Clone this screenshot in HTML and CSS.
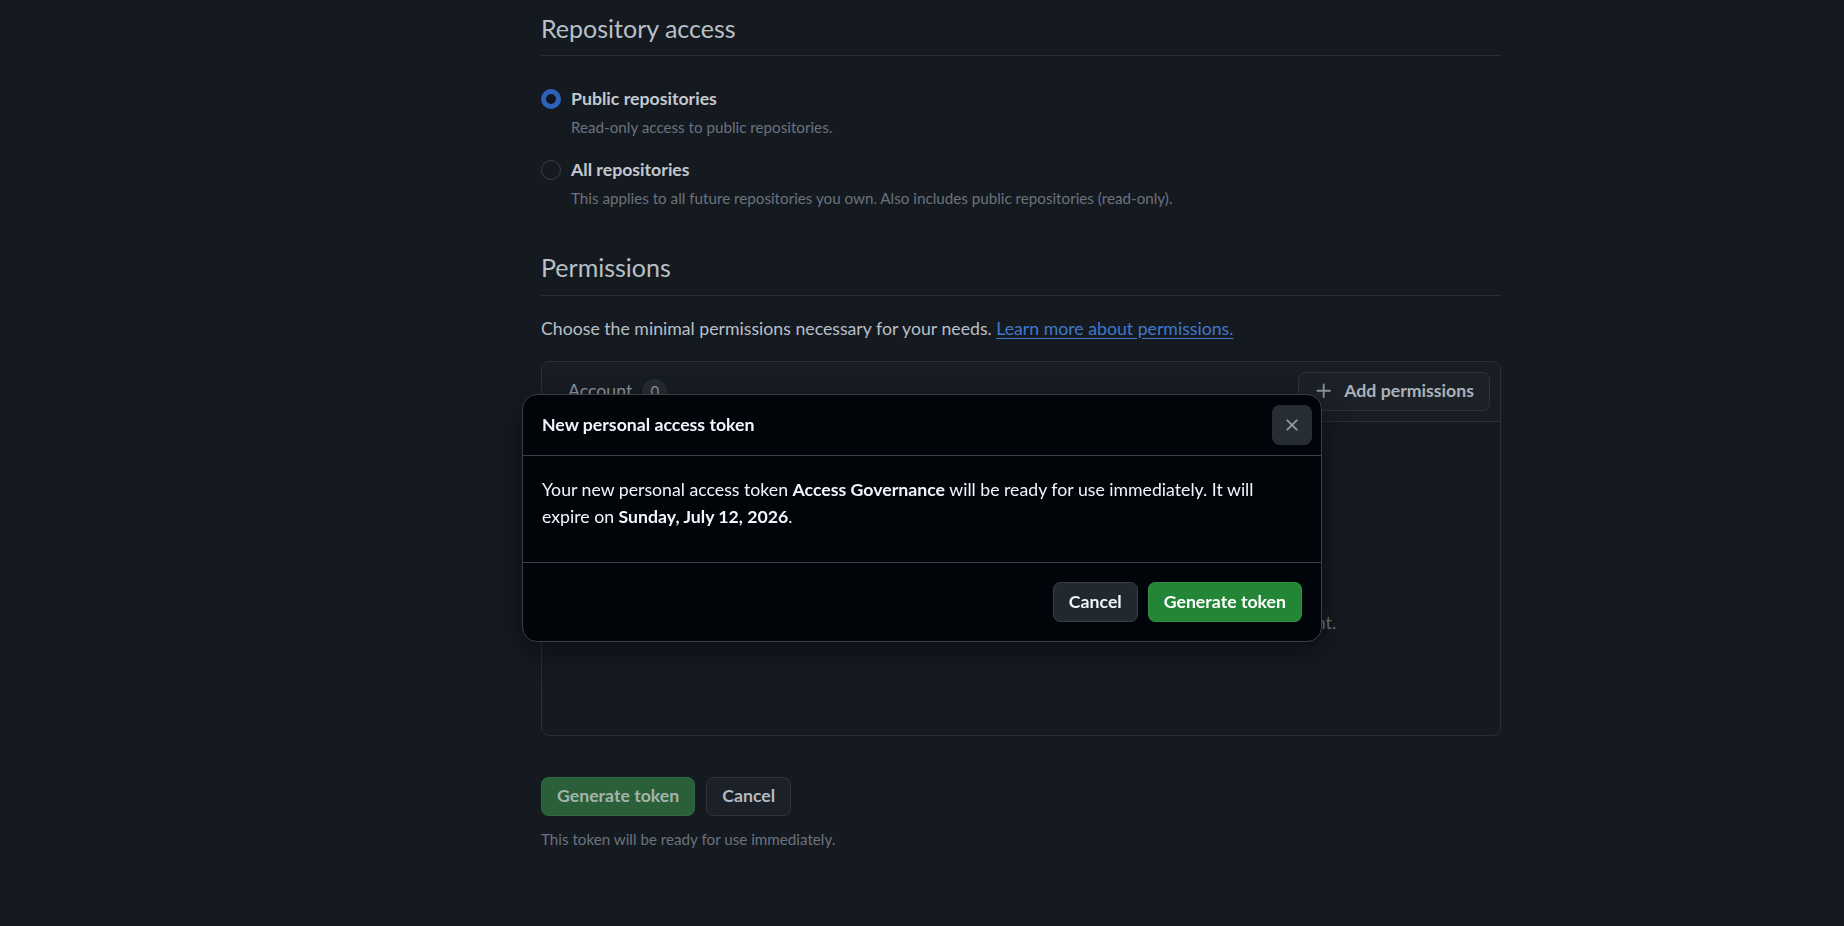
FILE: index.html
```html
<!DOCTYPE html>
<html lang="en">
<head>
<meta charset="utf-8">
<title>New fine-grained personal access token</title>
<link rel="stylesheet" href="styles.css">
</head>
<body>
<div class="layout">
  <aside class="sidebar"></aside>
  <main class="main">
    <section class="section">
      <h2 class="subhead">Repository access</h2>
      <div class="radio-list">
        <div class="radio-item">
          <span class="radio radio-checked"></span>
          <div class="radio-body">
            <div class="radio-label">Public repositories</div>
            <div class="note">Read-only access to public repositories.</div>
          </div>
        </div>
        <div class="radio-item">
          <span class="radio"></span>
          <div class="radio-body">
            <div class="radio-label">All repositories</div>
            <div class="note">This applies to all future repositories you own. Also includes public repositories (read-only).</div>
          </div>
        </div>
      </div>
    </section>

    <section class="section section-perms">
      <h2 class="subhead">Permissions</h2>
      <p class="lead">Choose the minimal permissions necessary for your needs. <a href="#" class="link">Learn more about permissions.</a></p>
      <div class="box">
        <div class="box-header">
          <div class="tabs">
            <span class="tab tab-selected">Account <span class="counter">0</span></span>
          </div>
          <button class="btn btn-add" type="button">
            <svg class="icon" viewBox="0 0 16 16" width="20" height="20" aria-hidden="true"><path fill="currentColor" d="M7.75 2a.75.75 0 0 1 .75.75V7h4.25a.75.75 0 0 1 0 1.5H8.5v4.25a.75.75 0 0 1-1.5 0V8.5H2.75a.75.75 0 0 1 0-1.5H7V2.75A.75.75 0 0 1 7.75 2Z"/></svg>
            <span>Add permissions</span>
          </button>
        </div>
        <div class="blankslate">
          <h3 class="blankslate-title">No account permissions added yet</h3>
          <p class="blankslate-text">Account permissions allow this token to access resources owned by your account.</p>
        </div>
      </div>
      <div class="form-actions">
        <button class="btn btn-green-dim" type="button">Generate token</button>
        <button class="btn btn-gray-dim" type="button">Cancel</button>
      </div>
      <p class="note note-footer">This token will be ready for use immediately.</p>
    </section>
  </main>
</div>

<div class="backdrop">
  <div class="dialog" role="dialog" aria-labelledby="dialog-title">
    <div class="dialog-header">
      <h1 class="dialog-title" id="dialog-title">New personal access token</h1>
      <button class="dialog-close" type="button" aria-label="Close">
        <svg viewBox="0 0 16 16" width="20" height="20" aria-hidden="true"><path fill="currentColor" d="M3.72 3.72a.75.75 0 0 1 1.06 0L8 6.94l3.22-3.22a.749.749 0 0 1 1.275.326.749.749 0 0 1-.215.734L9.06 8l3.220 3.22a.749.749 0 0 1-.326 1.275.749.749 0 0 1-.734-.215L8 9.06l-3.22 3.22a.751.751 0 0 1-1.042-.018.751.751 0 0 1-.018-1.042L6.94 8 3.72 4.78a.75.75 0 0 1 0-1.06Z"/></svg>
      </button>
    </div>
    <div class="dialog-body">
      <p>Your new personal access token <strong>Access Governance</strong> will be ready for use immediately. It will expire on <strong>Sunday, July 12, 2026</strong>.</p>
    </div>
    <div class="dialog-footer">
      <button class="btn btn-default" type="button">Cancel</button>
      <button class="btn btn-primary" type="button">Generate token</button>
    </div>
  </div>
</div>
</body>
</html>
```

FILE: styles.css
```css
* { box-sizing: border-box; }

html, body {
  margin: 0;
  padding: 0;
  background: #151a21;
  height: 100%;
  overflow: hidden;
}

body {
  font-family: Lato, "Liberation Sans", sans-serif;
  font-size: 17.7px;
  line-height: 26px;
  color: #b8bfc6;
}

.layout {
  display: grid;
  grid-template-columns: 541px 960px;
}

.main {
  padding-top: 10px;
}

.subhead {
  margin: 0;
  font-size: 25px;
  font-weight: 400;
  line-height: 37px;
  color: #b9c0c7;
  padding-bottom: 8px;
  border-bottom: 1px solid #2a2f37;
}

.radio-list {
  margin-top: 30px;
  display: flex;
  flex-direction: column;
  gap: 19px;
}

.radio-item {
  display: flex;
  align-items: flex-start;
  gap: 10px;
}

.radio {
  flex: none;
  width: 20px;
  height: 20px;
  margin-top: 3px;
  border-radius: 50%;
  border: 1px solid #3b4149;
  background: #151a21;
}

.radio-checked {
  border: 5px solid #2c63b8;
  background: #12161c;
}

.radio-label {
  font-weight: 700;
  font-size: 17.7px;
  line-height: 26px;
  color: #c3c9cf;
}

.note {
  font-size: 15.2px;
  line-height: 22px;
  color: #6b737d;
  margin-top: 4px;
}

.section-perms {
  margin-top: 40.5px;
}

.section-perms .subhead {
  padding-bottom: 11px;
  line-height: 34px;
}

.lead {
  margin: 20px 0 19px;
  font-size: 17.7px;
  line-height: 26px;
  color: #b8bfc6;
}

.link {
  color: #4178c8;
  text-decoration: underline;
  text-underline-offset: 3px;
}

.box {
  border: 1px solid #2a2f37;
  border-radius: 8px;
  overflow: hidden;
}

.box-header {
  display: flex;
  align-items: center;
  justify-content: space-between;
  padding: 10px 10px 10px;
  background: #181d24;
  border-bottom: 1px solid #2a2f37;
}

.tabs {
  display: flex;
  align-items: center;
}

.tab {
  display: flex;
  align-items: center;
  gap: 10px;
  padding-left: 16px;
  font-size: 17.7px;
  color: #8d949c;
}

.counter {
  display: inline-flex;
  align-items: center;
  justify-content: center;
  min-width: 25px;
  height: 25px;
  border-radius: 13px;
  background: #262c33;
  font-size: 15px;
  color: #8d949c;
}

.btn {
  display: inline-flex;
  align-items: center;
  justify-content: center;
  gap: 10px;
  height: 40px;
  padding: 0 15px;
  border-radius: 7.5px;
  border: 1px solid transparent;
  font-family: inherit;
  font-size: 17.7px;
  font-weight: 700;
  line-height: 26px;
  cursor: pointer;
}

.btn-add {
  height: 39px;
  background: #1c2128;
  border-color: #2e343b;
  color: #aab1b9;
}

.btn-add .icon {
  color: #8d949c;
}

.blankslate {
  height: 313px;
  padding: 148px 40px 0;
  text-align: center;
}

.blankslate-title {
  margin: 0 0 10px;
  font-size: 22px;
  line-height: 30px;
  font-weight: 700;
  color: #c3c9cf;
}

.blankslate-text {
  margin: 0;
  font-size: 17.7px;
  line-height: 26px;
  color: #6b737d;
}

.form-actions {
  margin-top: 41px;
  display: flex;
  gap: 11px;
}

.form-actions .btn {
  height: 39px;
}

.btn-green-dim {
  background: #29603a;
  border-color: #2f6a40;
  color: #a5b4aa;
}

.btn-gray-dim {
  background: #1c2129;
  border-color: #2e343c;
  color: #b3bbc3;
}

.note-footer {
  margin: 12px 0 0;
}

/* Dialog */
.backdrop {
  position: fixed;
  inset: 0;
  display: flex;
  justify-content: center;
  align-items: flex-start;
  padding-top: 394px;
}

.dialog {
  width: 800px;
  background: #010409;
  border: 1px solid #3a4048;
  border-radius: 15px;
  box-shadow: 0 10px 30px rgba(0, 0, 0, 0.45);
  overflow: hidden;
}

.dialog-header {
  display: flex;
  align-items: center;
  justify-content: space-between;
  padding: 10px 9px 10px 19px;
  border-bottom: 1px solid #3a4048;
}

.dialog-title {
  margin: 0;
  font-size: 17.7px;
  line-height: 26px;
  font-weight: 700;
  color: #f0f6fc;
}

.dialog-close {
  width: 40px;
  height: 40px;
  display: flex;
  align-items: center;
  justify-content: center;
  padding: 0;
  border: 0;
  border-radius: 7.5px;
  background: #272d35;
  color: #9198a1;
}

.dialog-body {
  padding: 20px 19px;
}

.dialog-body p {
  margin: 0 0 12px;
  font-size: 17.7px;
  line-height: 27px;
  color: #f0f6fc;
}

.dialog-body strong {
  font-weight: 700;
}

.dialog-footer {
  display: flex;
  justify-content: flex-end;
  gap: 10px;
  padding: 19px 19px;
  border-top: 1px solid #3a4048;
}

.btn-default {
  background: #212830;
  border-color: #3a4048;
  color: #f0f6fc;
}

.btn-primary {
  background: #238636;
  border-color: rgba(255, 255, 255, 0.08);
  color: #ffffff;
}
```
